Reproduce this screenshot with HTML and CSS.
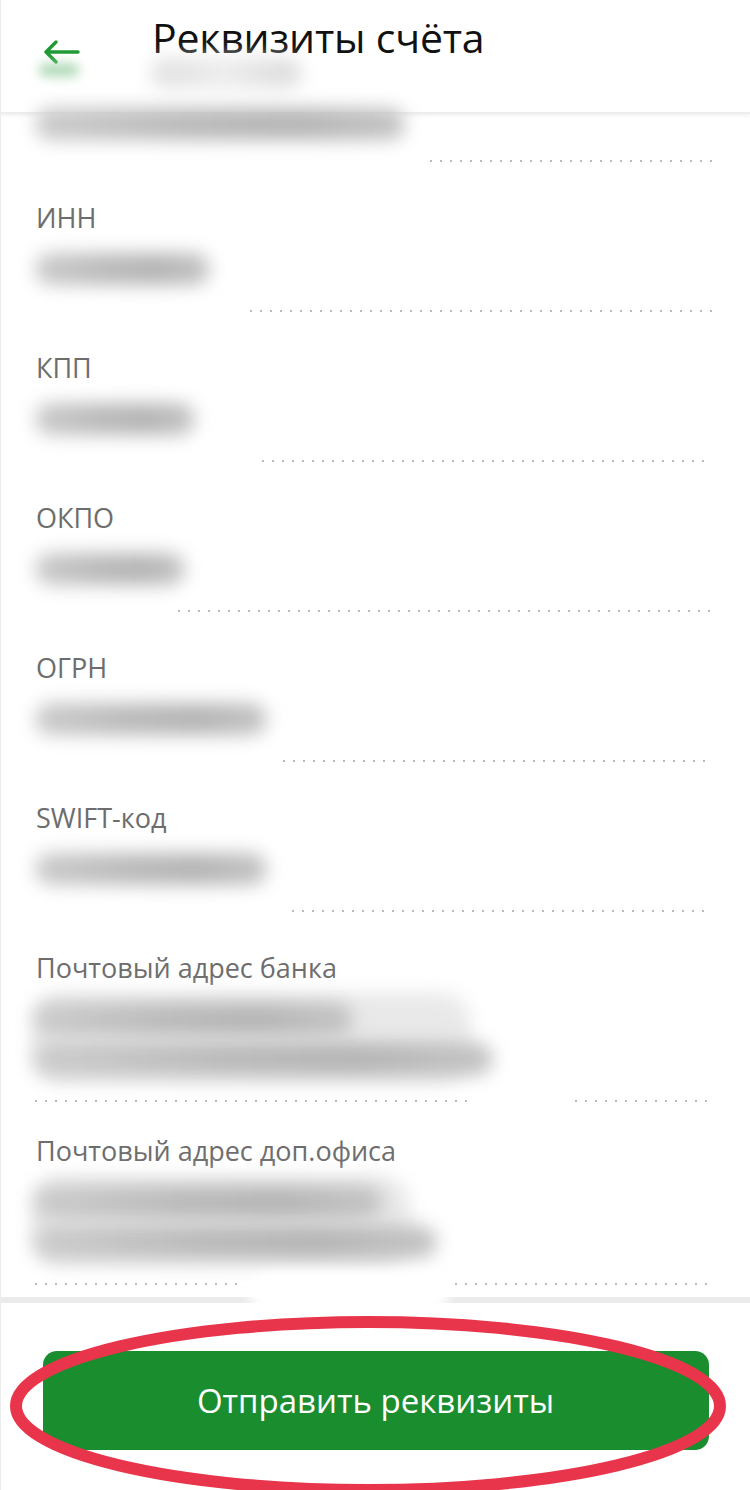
FILE: index.html
```html
<!DOCTYPE html>
<html lang="ru">
<head>
  <meta charset="UTF-8">
  <title>Реквизиты счёта</title>
  <link rel="stylesheet" href="styles.css">
</head>
<body>
  <div id="screen">
    <header id="topbar">
      <button class="back" aria-label="Назад">
        <svg width="38" height="24" viewBox="0 0 38 24"><path d="M36 12H4M14 2L4 12l10 10" fill="none" stroke="#1f9a35" stroke-width="3.4" stroke-linecap="round" stroke-linejoin="round"/></svg>
      </button>
      <h1>Реквизиты счёта</h1>
      <span class="glow"></span>
      <span class="smudge head-smudge" style="--w:150px"></span>
    </header>

    <main id="fields">
      <div class="field partial">
        <div class="value"><span class="smudge" style="--w:370px"></span></div>
        <div class="rule"><i style="margin-left:395px"></i></div>
      </div>

      <div class="field">
        <div class="label">ИНН</div>
        <div class="value"><span class="smudge" style="--w:175px"></span></div>
        <div class="rule"><i style="margin-left:215px"></i></div>
      </div>

      <div class="field">
        <div class="label">КПП</div>
        <div class="value"><span class="smudge" style="--w:160px"></span></div>
        <div class="rule"><i style="margin-left:227px"></i></div>
      </div>

      <div class="field">
        <div class="label">ОКПО</div>
        <div class="value"><span class="smudge" style="--w:150px"></span></div>
        <div class="rule"><i style="margin-left:143px"></i></div>
      </div>

      <div class="field">
        <div class="label">ОГРН</div>
        <div class="value"><span class="smudge" style="--w:232px"></span></div>
        <div class="rule"><i style="margin-left:248px"></i></div>
      </div>

      <div class="field">
        <div class="label">SWIFT-код</div>
        <div class="value"><span class="smudge" style="--w:232px"></span></div>
        <div class="rule"><i style="margin-left:257px"></i></div>
      </div>

      <div class="field">
        <div class="label">Почтовый адрес банка</div>
        <div class="value multi" style="--w:440px">
          <span class="smudge" style="--w:318px"></span>
          <span class="smudge" style="--w:458px"></span>
        </div>
        <div class="rule"><i style="width:435px;flex:none"></i><i style="margin-left:105px"></i></div>
      </div>

      <div class="field tight">
        <div class="label">Почтовый адрес доп.офиса</div>
        <div class="value multi" style="--w:380px">
          <span class="smudge" style="--w:348px"></span>
          <span class="smudge" style="--w:402px"></span>
        </div>
        <div class="rule"><i style="width:210px;flex:none"></i><i style="margin-left:210px"></i></div>
      </div>
    </main>

    <footer id="actions">
      <span class="cover"></span>
      <button class="send">Отправить реквизиты</button>
      <svg class="mark" width="750" height="196" viewBox="0 0 750 196">
        <ellipse cx="367" cy="99" rx="352" ry="84" fill="none" stroke="#e8354b" stroke-width="12"/>
      </svg>
    </footer>
  </div>
</body>
</html>
```

FILE: styles.css
```css
body {
  margin: 0;
  background: #fff;
  font-family: "Open Sans", "Noto Sans", sans-serif;
}
#screen {
  width: 750px;
  height: 1490px;
  display: flex;
  flex-direction: column;
  overflow: hidden;
  border-left: 1px solid #ececec;
  box-sizing: border-box;
}
#topbar {
  position: relative;
  height: 112px;
  flex: none;
  display: flex;
  align-items: flex-start;
  border-bottom: 2px solid #ededed;
  box-shadow: 0 2px 3px rgba(0,0,0,0.05);
  z-index: 1;
}
.back {
  margin: 40px 0 0 41px;
  padding: 0;
  border: none;
  background: none;
  width: 38px;
  height: 24px;
}
#topbar h1 {
  margin: 9px 0 0 72px;
  font-size: 41px;
  font-weight: 500;
  color: #111;
  letter-spacing: -0.2px;
}
.glow {
  position: absolute;
  left: 38px;
  top: 64px;
  width: 40px;
  height: 12px;
  border-radius: 6px;
  background: #a6d4ae;
  filter: blur(6px);
}

#fields {
  flex: 1;
  padding: 0 38px 0 34px;
  position: relative;
  z-index: 2;
}
.field {
  padding-top: 41px;
}
.field.partial {
  padding-top: 0;
  margin-top: -10px;
}
.field.tight {
  padding-top: 34px;
}
.label {
  font-size: 27px;
  line-height: 30px;
  color: #6d6d6d;
  margin-left: 1px;
}
.value {
  position: relative;
  margin-top: 16px;
  height: 40px;
  display: flex;
  flex-direction: column;
  justify-content: center;
}
.partial .value {
  margin-top: 0;
}
.value.multi {
  height: 80px;
  justify-content: space-around;
}
.value.multi::before {
  content: "";
  position: absolute;
  left: -4px;
  top: -6px;
  width: var(--w);
  height: 90px;
  border-radius: 30px;
  background: #e9e9e9;
  filter: blur(9px);
}
.smudge {
  position: relative;
  display: block;
  width: var(--w);
  height: 32px;
  border-radius: 16px;
  background: linear-gradient(90deg, #cbcbcb, #bababa 40%, #b4b4b4 70%, #c4c4c4);
  filter: blur(9px);
}
#topbar .head-smudge {
  position: absolute;
  left: 150px;
  top: 58px;
  height: 30px;
  background: linear-gradient(90deg, #e0e0e0, #ececec 50%, #dadada);
}
.rule {
  display: flex;
  margin-top: 21px;
  height: 2px;
}
.partial .rule {
  margin-top: 16px;
}
.rule i {
  flex: 1;
  height: 2px;
  background: linear-gradient(90deg, #b9b9b9 2px, transparent 2px) 0 0 / 10px 2px repeat-x;
}

#actions {
  position: relative;
  height: 193px;
  flex: none;
  display: flex;
  align-items: flex-start;
  justify-content: center;
  border-top: 6px solid #ebebeb;
  box-sizing: border-box;
  z-index: 3;
}
.cover {
  position: absolute;
  left: 248px;
  top: -30px;
  width: 200px;
  height: 40px;
  border-radius: 20px;
  background: #fff;
  filter: blur(6px);
}
.send {
  margin-top: 48px;
  width: 666px;
  height: 99px;
  border: none;
  border-radius: 14px;
  background: #1a8d2f;
  color: #fff;
  font-family: "Open Sans", "Noto Sans", sans-serif;
  font-size: 33px;
}
.mark {
  position: absolute;
  left: 0;
  top: 4px;
  pointer-events: none;
}
```
